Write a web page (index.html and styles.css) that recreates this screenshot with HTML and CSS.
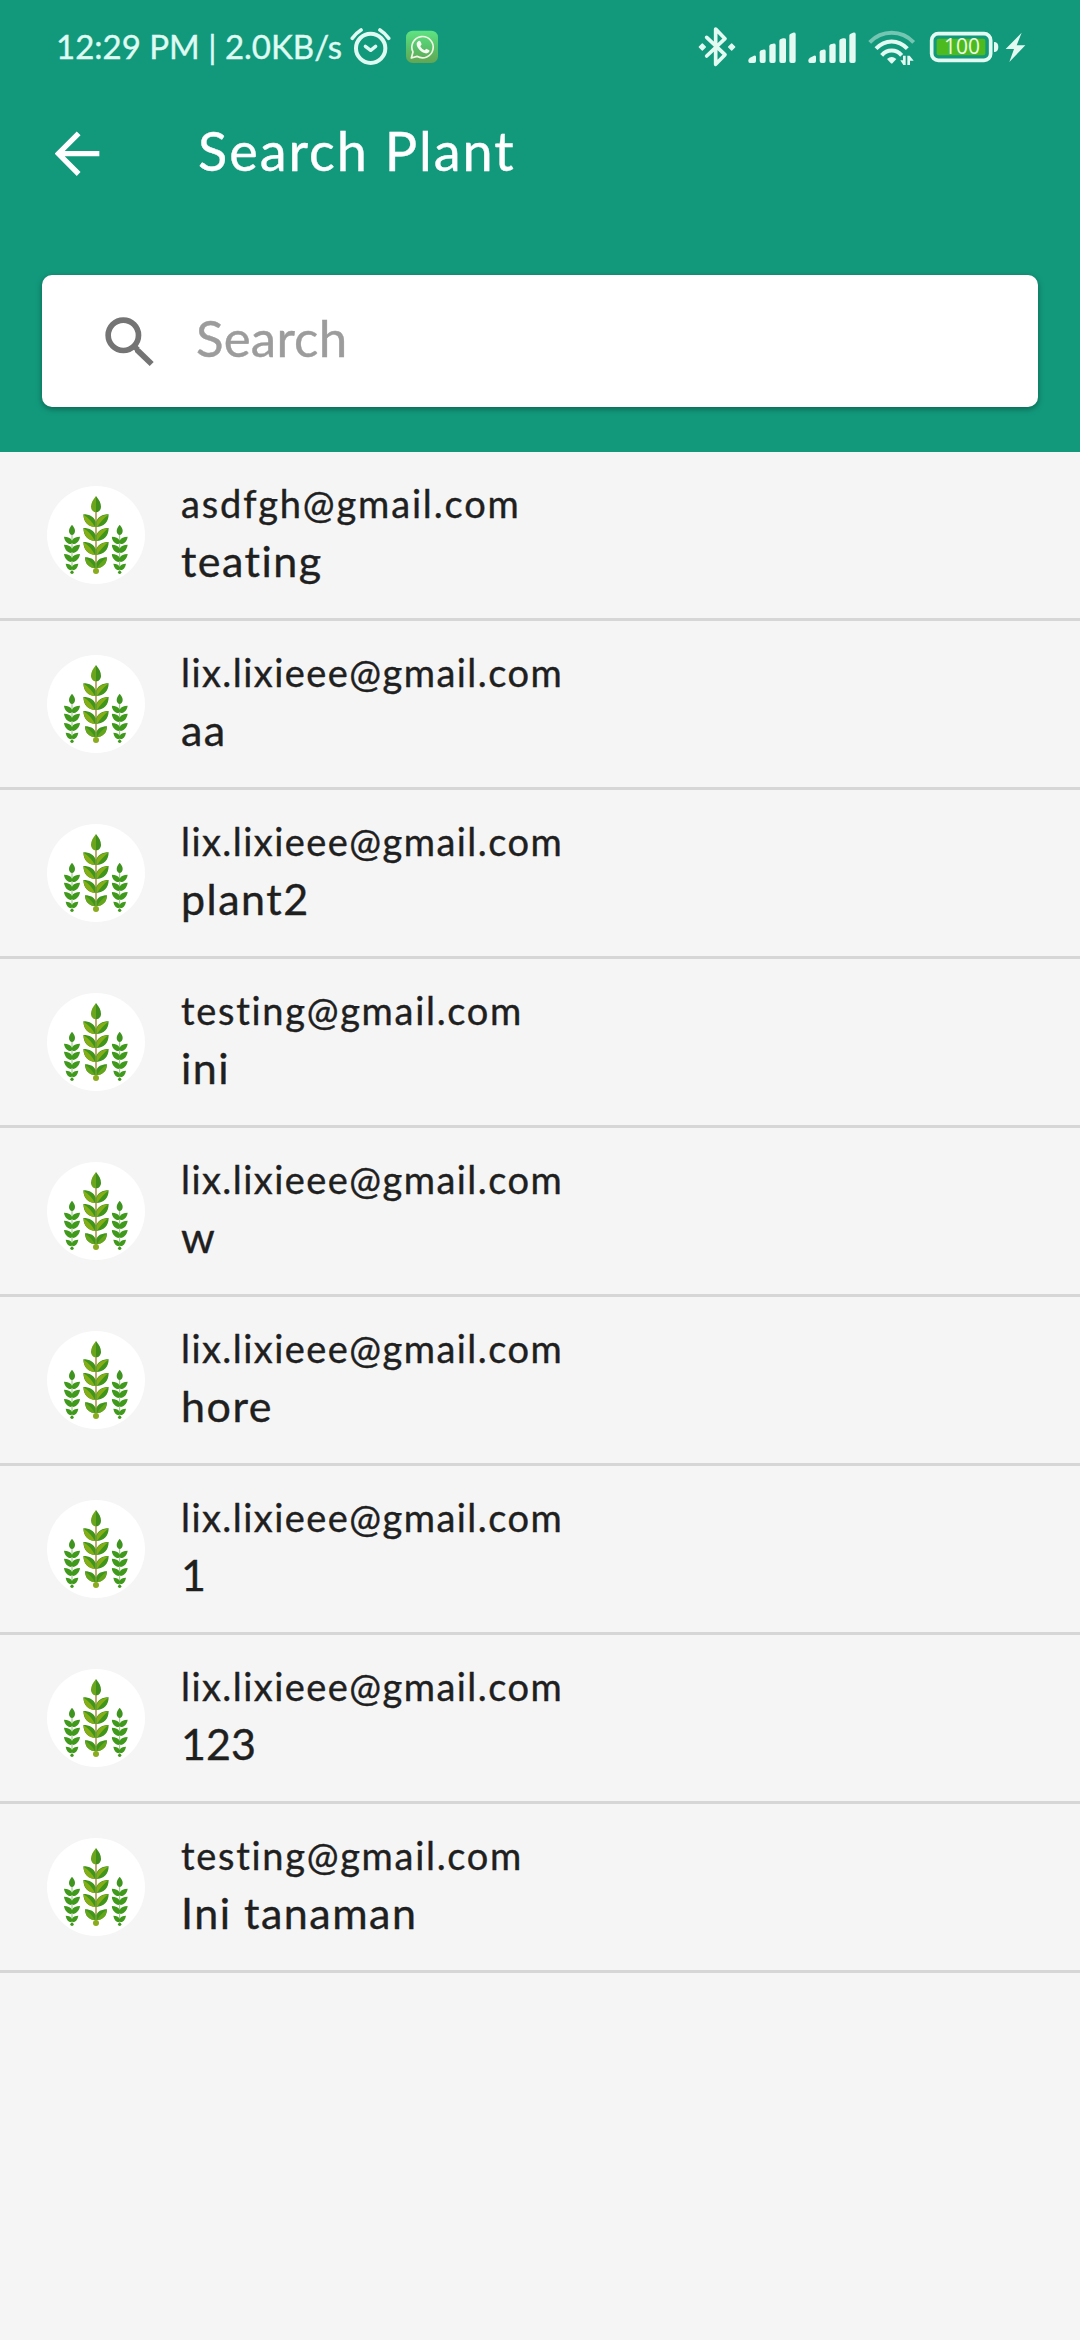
FILE: index.html
```html
<!DOCTYPE html>
<html lang="en">
<head>
<meta charset="utf-8">
<title>Search Plant</title>
<link rel="stylesheet" href="styles.css">
</head>
<body>
<svg class="defs" aria-hidden="true">
  <defs>
    <symbol id="small-plant" viewBox="102 194 50 150">
      <path d="M126 224v112" stroke="#8fc07c" stroke-width="3"/>
      <path d="M126 194c-6 7-9 13-9 19 0 7 4 12 9 12s9-5 9-12c0-6-3-12-9-19z" fill="#3f9420"/>
      <g fill="#3f9a1c">
        <path d="M102 230c12 0 20 3 24 12 4-9 12-12 24-12-2 15-11 22-21 22l-3-3-3 3c-10 0-19-7-21-22z"/>
        <path d="M102 254c12 0 20 3 24 12 4-9 12-12 24-12-2 15-11 24-21 25l-3-3-3 3c-10-1-19-10-21-25z"/>
        <path d="M102 282c12 0 20 3 24 12 4-9 12-12 24-12-2 14-11 23-21 24l-3-3-3 3c-10-1-19-10-21-24z"/>
        <path d="M107 311c10 0 16 3 19 10 3-7 9-10 19-10-2 12-8 19-16 20l-3-3-3 3c-8-1-14-8-16-20z"/>
        <circle cx="126" cy="337" r="5"/>
      </g>
    </symbol>
    <symbol id="plants" viewBox="51 78 294 294">
      <use href="#small-plant" x="102" y="194" width="50" height="150"/>
      <use href="#small-plant" x="245" y="194" width="50" height="150"/>
      <path d="M198 150v180" stroke="#b39a4e" stroke-width="5"/>
      <path d="M198 108c-10 12-15 22-15 32 0 9 6 17 15 17z" fill="#6aa51c"/>
      <path d="M198 108c10 12 15 22 15 32 0 9-6 17-15 17z" fill="#3f8f1a"/>
      <g fill="#3f961a">
        <path d="M160 163c19 0 33 8 37 22v16c-22 0-37-14-37-38zM236 163c-19 0-33 8-37 22v16c22 0 37-14 37-38z"/>
        <path d="M160 204c19 0 33 8 37 22v17c-22 0-37-15-37-39zM236 204c-19 0-33 8-37 22v17c22 0 37-15 37-39z"/>
        <path d="M160 246c19 0 33 8 37 22v17c-22-2-37-15-37-39zM236 246c-19 0-33 8-37 22v17c22-2 37-15 37-39z"/>
        <path d="M165 292c17 0 29 7 32 18v15c-19-2-32-12-32-33zM231 292c-17 0-29 7-32 18v15c19-2 32-12 32-33z"/>
      </g>
      <g fill="#84ad16">
        <path d="M161 164c14 9 27 22 34 37-18 0-34-14-34-37zM235 164c-14 1-30 6-34 21v16c9-13 21-27 34-37z"/>
        <path d="M161 205c14 9 27 23 34 38-18 0-34-14-34-38zM235 205c-14 1-30 6-34 21v17c9-13 21-28 34-38z"/>
        <path d="M161 247c14 9 27 23 34 38-18 0-34-14-34-38zM235 247c-14 1-30 6-34 21v17c9-13 21-28 34-38z"/>
      </g>
      <path d="M166 293c12 8 23 19 29 32-16-2-29-12-29-32zM230 293c-12 8-23 19-29 32 16-2 29-12 29-32z" fill="#65a51a"/>
      <circle cx="198" cy="333" r="9" fill="#8aac1c"/>
    </symbol>
    <symbol id="signal" viewBox="204 36 144 120">
      <g fill="#e3faf3">
        <path d="M205 136q0-5 5-8l12-6q6-2 6 4v12q0 6-6 6h-12q-5 0-5-6z"/>
        <path d="M239 112q0-4 4-6l6-2q8-1 8 4v30q0 6-6 6h-6q-6 0-6-6z"/>
        <path d="M268 94q0-4 4-6l7-2q8-1 8 4v48q0 6-6 6h-7q-6 0-6-6z"/>
        <path d="M298 78q0-4 4-6l7-2q9-1 9 4v64q0 6-6 6h-8q-6 0-6-6z"/>
        <path d="M328 62q0-4 4-6l7-3q8-1 8 4v81q0 6-6 6h-7q-6 0-6-6z"/>
      </g>
    </symbol>
  </defs>
</svg>

<header class="header">
  <div class="status-bar">
    <span class="status-text">12:29 PM | 2.0KB/s</span>
    <svg class="alarm" viewBox="930 36 123 120">
      <g fill="none" stroke="#dffaf2" stroke-linecap="round" stroke-linejoin="round">
        <circle cx="992" cy="100" r="44" stroke-width="12"/>
        <path d="M937 70q10-15 26-25M1046 70q-10-15-26-25" stroke-width="11"/>
        <path d="M976 94l16 12 15-12" stroke-width="10"/>
      </g>
    </svg>
    <svg class="whatsapp" viewBox="1098 36 96 120">
      <defs><linearGradient id="wa" x1="0" y1="0" x2="0" y2="1"><stop offset="0" stop-color="#5fe383"/><stop offset=".5" stop-color="#57c46c"/><stop offset="1" stop-color="#64a552"/></linearGradient></defs>
      <rect x="1098" y="47" width="96" height="97" rx="20" fill="url(#wa)"/>
      <path d="M1114 129l5-18a32 32 0 1 1 12 13z" fill="none" stroke="#f1f6e6" stroke-width="5" stroke-linejoin="round"/>
      <path d="M1133 80c4-4 7-3 9 1l3 7-4 6c3 6 7 10 13 12l5-5 9 5c2 2-2 8-7 9-13 2-31-15-31-27 0-4 1-6 3-8z" fill="#f7fbf2"/>
    </svg>
    <div class="status-icons">
      <svg class="bluetooth" viewBox="54 36 114 120">
        <path d="M80 67l55 52-28 29V42l28 29-55 52" fill="none" stroke="#e3faf3" stroke-width="11" stroke-linejoin="round" stroke-linecap="round"/>
        <path d="M58 96l9-9 9 9-9 9zM146 96l9-9 9 9-9 9z" fill="#e3faf3" stroke="#e3faf3" stroke-width="4" stroke-linejoin="round"/>
      </svg>
      <svg class="cell"><use href="#signal"/></svg>
      <svg class="cell"><use href="#signal"/></svg>
      <svg class="wifi" viewBox="564 36 144 120">
        <g fill="none" stroke="#e3faf3" stroke-width="12">
          <path d="M569 82c37-38 95-38 132 0" stroke="#74c6b2"/>
          <path d="M588 101c27-29 67-29 94 0"/>
          <path d="M605 121c17-19 43-19 60 0"/>
        </g>
        <path d="M621 132q14-12 28 0l-11 12q-3 3-6 0z" fill="#e3faf3"/>
        <path d="M677 122v28h-7l-9-14h8v-14zM682 150v-28h7l12 15h-11v13z" fill="#e3faf3"/>
      </svg>
      <svg class="battery" viewBox="747 36 210 120">
        <rect x="755" y="56" width="177" height="80" rx="20" fill="none" stroke="#e3faf3" stroke-width="11"/>
        <rect x="770" y="71" width="146" height="50" rx="6" fill="#4dbb20"/>
        <path d="M942 81q13 0 13 15t-13 15z" fill="#e3faf3"/>
        <text class="battery-text" x="846" y="116" text-anchor="middle" textLength="108" lengthAdjust="spacingAndGlyphs">100</text>
      </svg>
      <svg class="bolt" viewBox="975 36 63 120"><path d="M1025 53l-48 49h25l-14 39 48-50h-26z" fill="#e3faf3"/></svg>
    </div>
  </div>
  <div class="app-bar">
    <svg class="back" viewBox="75 91 135 135"><path d="M208 159H84M146 98l-61 61 61 61" fill="none" stroke="#fff" stroke-width="16"/></svg>
    <h1 class="title">Search Plant</h1>
  </div>
  <div class="search-box">
    <svg class="search-icon" viewBox="224 167 147 147">
      <circle cx="279" cy="222" r="45.500" fill="none" stroke="#747474" stroke-width="17"/>
      <path d="M314 262h15l41 40-12 12-44-42z" fill="#747474"/>
      <path d="M309 252l14 14" stroke="#747474" stroke-width="16"/>
    </svg>
    <span class="placeholder">Search</span>
  </div>
</header>

<main class="list">
  <div class="row"><svg class="avatar"><use href="#plants"/></svg><div class="texts"><div class="email wider">asdfgh@gmail.com</div><div class="name">teating</div></div></div>
  <div class="row"><svg class="avatar"><use href="#plants"/></svg><div class="texts"><div class="email">lix.lixieee@gmail.com</div><div class="name">aa</div></div></div>
  <div class="row"><svg class="avatar"><use href="#plants"/></svg><div class="texts"><div class="email">lix.lixieee@gmail.com</div><div class="name">plant2</div></div></div>
  <div class="row"><svg class="avatar"><use href="#plants"/></svg><div class="texts"><div class="email wide">testing@gmail.com</div><div class="name">ini</div></div></div>
  <div class="row"><svg class="avatar"><use href="#plants"/></svg><div class="texts"><div class="email">lix.lixieee@gmail.com</div><div class="name">w</div></div></div>
  <div class="row"><svg class="avatar"><use href="#plants"/></svg><div class="texts"><div class="email">lix.lixieee@gmail.com</div><div class="name">hore</div></div></div>
  <div class="row"><svg class="avatar"><use href="#plants"/></svg><div class="texts"><div class="email">lix.lixieee@gmail.com</div><div class="name digits">1</div></div></div>
  <div class="row"><svg class="avatar"><use href="#plants"/></svg><div class="texts"><div class="email">lix.lixieee@gmail.com</div><div class="name digits">123</div></div></div>
  <div class="row"><svg class="avatar"><use href="#plants"/></svg><div class="texts"><div class="email wide">testing@gmail.com</div><div class="name">Ini tanaman</div></div></div>
</main>
</body>
</html>
```
FILE: styles.css
```css
* { box-sizing: border-box; }
body {
  margin: 0;
  min-height: 2340px;
  background: #f5f5f5;
  color: #1f1f1f;
  font-family: Lato, "Noto Sans", sans-serif;
  -webkit-text-stroke: .4px currentColor;
  overflow: hidden;
}
svg { display: block; flex: none; }
.defs { display: none; }
.header {
  height: 452px;
  background: #12997c;
  display: flex;
  flex-direction: column;
}
.status-bar {
  height: 94px;
  padding: 27px 54px 0 56px;
  display: flex;
  align-items: flex-start;
}
.status-text {
  width: 294px;
  font-size: 33px;
  line-height: 38px;
  white-space: nowrap;
  color: #dffaf2;
}
.alarm { width: 41px; height: 40px; }
.whatsapp { width: 32px; height: 40px; margin-left: 15px; }
.status-icons { display: flex; gap: 12px; margin-left: auto; }
.bluetooth { width: 38px; height: 40px; }
.cell, .wifi { width: 48px; height: 40px; }
.battery { width: 70px; height: 40px; margin-left: 1px; }
.battery-text { font: 66px "Open Sans", sans-serif; fill: #eafbe2; stroke: none; }
.bolt { width: 21px; height: 40px; margin-left: -6px; }
.app-bar {
  height: 118px;
  padding-left: 55px;
  display: flex;
  align-items: center;
}
.back { width: 45px; height: 45px; }
.title {
  margin: 0 0 4px 98px;
  font-size: 54px;
  line-height: 64px;
  font-weight: 400;
  letter-spacing: 2px;
  color: #fff;
}
.search-box {
  height: 132px;
  margin: 63px 42px 0;
  padding-left: 63px;
  display: flex;
  align-items: center;
  background: #fff;
  border-radius: 10px;
  box-shadow: 0 2px 6px rgba(0, 0, 0, .35);
}
.search-icon { width: 49px; height: 49px; }
.placeholder {
  margin: 0 0 6px 42px;
  font-size: 51px;
  line-height: 60px;
  letter-spacing: .2px;
  color: #9c9c9c;
}
.row {
  height: 169px;
  padding-left: 47px;
  display: flex;
  align-items: center;
  border-bottom: 3px solid #d6d6d6;
}
.avatar {
  width: 98px;
  height: 98px;
  border-radius: 50%;
  background: #fff;
}
.texts { margin: 0 0 6px 36px; white-space: nowrap; }
.email { font-size: 38px; line-height: 58px; letter-spacing: 1.45px; }
.email.wide { letter-spacing: 1.7px; }
.email.wider { letter-spacing: 1.85px; }
.name { font-size: 43px; line-height: 58px; letter-spacing: 1.5px; }
.name.digits { letter-spacing: 0; }
```
